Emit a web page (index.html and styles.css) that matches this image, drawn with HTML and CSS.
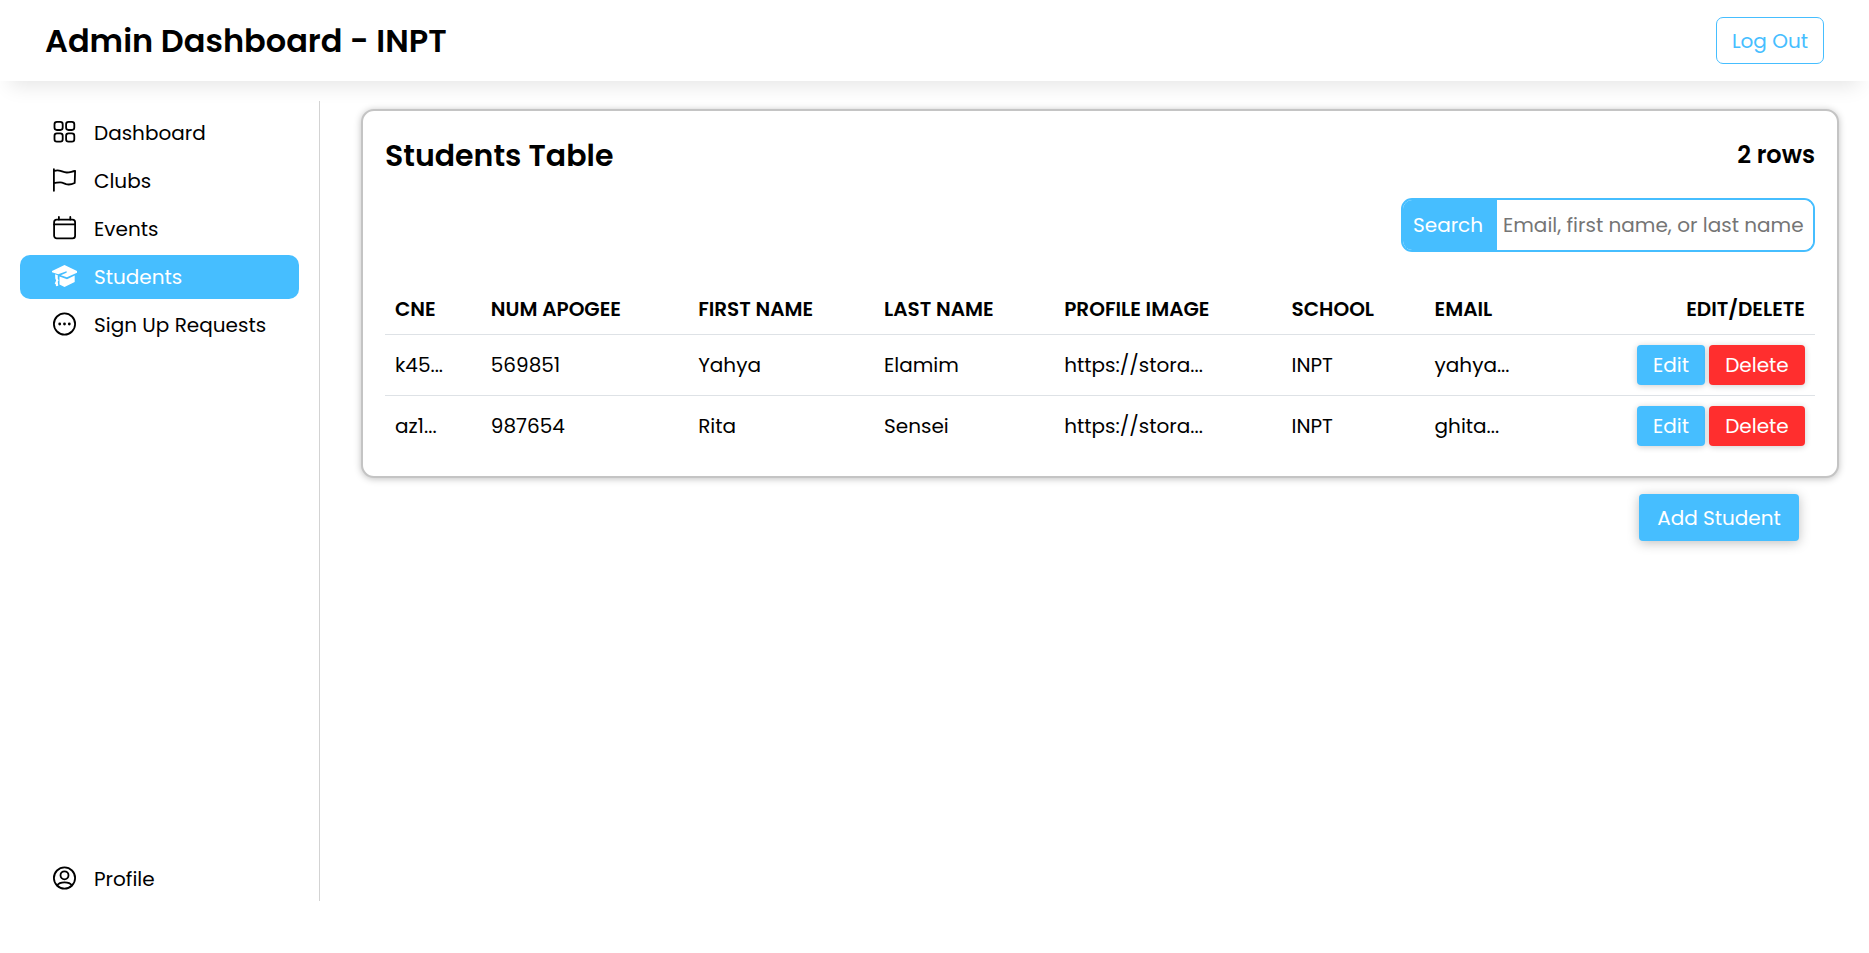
FILE: index.html
```html
<!DOCTYPE html>
<html lang="en">
<head>
<meta charset="utf-8">
<title>Admin Dashboard - INPT</title>
<link rel="stylesheet" href="styles.css">
</head>
<body>
<header class="topbar">
  <h1 class="topbar-title">Admin Dashboard - INPT</h1>
  <button type="button" class="logout">Log Out</button>
</header>
<div class="layout">
  <nav class="sidebar" aria-label="Main">
    <a class="nav-item" href="#dashboard">
      <svg class="icon" viewBox="0 0 24 24" aria-hidden="true"><rect x="2" y="1.8" width="8.2" height="8.2" rx="2.4"/><rect x="13.6" y="1.8" width="8.2" height="8.2" rx="2.4"/><rect x="2" y="13.4" width="8.2" height="8.2" rx="2.4"/><rect x="13.6" y="13.4" width="8.2" height="8.2" rx="2.4"/></svg>
      <span>Dashboard</span>
    </a>
    <a class="nav-item" href="#clubs">
      <svg class="icon" viewBox="0 0 24 24" aria-hidden="true"><path d="M1.4 1.200v21.600M1.400 3.200c2-.8 4.600-.9 6.600-.3 2 .6 3.500 1.500 6.200 1.600 3 .1 4.600-.9 8.400-1.500l-.4 12c-3.400 1.600-6.200 1.900-8.600 1.100-2.200-.8-3.800-1.700-6-1.700-2.400 0-4.200.2-6.200.8"/></svg>
      <span>Clubs</span>
    </a>
    <a class="nav-item" href="#events">
      <svg class="icon" viewBox="0 0 24 24" aria-hidden="true"><rect x="1.600" y="3.600" width="21" height="18.800" rx="2.600"/><path d="M1.600 8.400h21M6.400.9v2.700M17.800.9v2.700"/></svg>
      <span>Events</span>
    </a>
    <a class="nav-item active" href="#students" aria-current="page">
      <svg class="icon icon-cap" viewBox="0 0 26 24" aria-hidden="true"><path d="M13 .6 26 6.800v1.800l-10.500 4.800-6.300-2.200 5.800-2.700c.8-.4.3-1.700-.7-1.300L6.400 10.200 0 8V6.800z"/><path d="M7.800 12.600l7.800 2.900 8-3.900v6.600l-10.600 5.200-5.200-2.600z"/><path d="M3.200 10.100l2.800 1v3.700l.9 1.700-.9 1.500.5 4.200-2.300.4-.4-2.400-1-.1 1.500-3.500-.9-2z"/></svg>
      <span>Students</span>
    </a>
    <a class="nav-item" href="#requests">
      <svg class="icon" viewBox="0 0 24 24" aria-hidden="true"><circle cx="12" cy="12" r="10.600"/><g class="dots"><circle cx="7.200" cy="12" r="1.400"/><circle cx="12" cy="12" r="1.400"/><circle cx="16.800" cy="12" r="1.400"/></g></svg>
      <span>Sign Up Requests</span>
    </a>
    <a class="nav-item nav-profile" href="#profile">
      <svg class="icon" viewBox="0 0 24 24" aria-hidden="true"><circle cx="12" cy="12" r="10.600"/><circle cx="12" cy="9.300" r="4"/><path d="M4.600 19.400c1.300-2 4-3 7.400-3s6.100 1 7.400 3"/></svg>
      <span>Profile</span>
    </a>
  </nav>
  <main class="content">
    <section class="card">
      <div class="card-head">
        <h2 class="card-title">Students Table</h2>
        <p class="row-count">2 rows</p>
      </div>
      <div class="search">
        <label class="search-label" for="search">Search</label>
        <input class="search-input" id="search" type="text" placeholder="Email, first name, or last name">
      </div>
      <table class="students">
        <colgroup>
          <col class="col-cne"><col class="col-apogee"><col class="col-first"><col class="col-last"><col class="col-image"><col class="col-school"><col>
          <col class="col-actions">
        </colgroup>
        <thead>
          <tr><th>CNE</th><th>NUM APOGEE</th><th>FIRST NAME</th><th>LAST NAME</th><th>PROFILE IMAGE</th><th>SCHOOL</th><th>EMAIL</th><th class="actions-head">EDIT/DELETE</th></tr>
        </thead>
        <tbody>
          <tr>
            <td>k45...</td><td>569851</td><td>Yahya</td><td>Elamim</td><td>https://stora...</td><td>INPT</td><td>yahya...</td>
            <td><div class="actions"><button type="button" class="btn btn-edit">Edit</button><button type="button" class="btn btn-delete">Delete</button></div></td>
          </tr>
          <tr>
            <td>az1...</td><td>987654</td><td>Rita</td><td>Sensei</td><td>https://stora...</td><td>INPT</td><td>ghita...</td>
            <td><div class="actions"><button type="button" class="btn btn-edit">Edit</button><button type="button" class="btn btn-delete">Delete</button></div></td>
          </tr>
        </tbody>
      </table>
    </section>
    <button type="button" class="btn btn-add">Add Student</button>
  </main>
</div>
</body>
</html>
```
FILE: styles.css
```css
* { box-sizing: border-box; }

body {
  margin: 0;
  background: #fff;
  color: #000;
  font: 400 20px/30px Poppins, Inter, "Open Sans", sans-serif;
}

h1, h2, p { margin: 0; }

button, input { font: inherit; }

button { cursor: pointer; }

.topbar {
  display: flex;
  align-items: center;
  justify-content: space-between;
  padding: 17px 45px;
  box-shadow: 0 15px 20px -10px rgba(0, 0, 0, 0.1);
}

.topbar-title {
  font-size: 32px;
  font-weight: 600;
  line-height: 46px;
}

.logout {
  min-width: 108px;
  height: 47px;
  padding: 0 15px;
  border: 1px solid #46beff;
  border-radius: 7px;
  background: #fff;
  color: #46beff;
}

.layout {
  display: flex;
  padding-top: 20px;
}

.sidebar {
  display: flex;
  flex: 0 0 320px;
  flex-direction: column;
  gap: 4px;
  min-height: calc(100vh - 153px);
  padding: 10px 20px 0;
  border-right: 1px solid #d3d3d3;
}

.nav-item {
  display: flex;
  align-items: center;
  gap: 17px;
  height: 44px;
  padding: 0 32px;
  border-radius: 10px;
  color: #000;
  text-decoration: none;
  white-space: nowrap;
}

.nav-item.active {
  background: #46beff;
  color: #fff;
}

.nav-profile { margin-top: auto; }

.icon {
  flex: none;
  width: 25px;
  height: 24px;
  margin-bottom: 2px;
  fill: none;
  stroke: currentColor;
  stroke-width: 1.8;
  stroke-linecap: round;
  stroke-linejoin: round;
}

.icon-cap, .dots {
  fill: currentColor;
  stroke: none;
}

.content {
  display: flex;
  flex: 1;
  flex-direction: column;
  min-width: 0;
  padding: 8px 30px 0 41px;
}

.card {
  padding: 22px 22px 20px;
  border: 2px solid #c4c4c4;
  border-radius: 13px;
  background: #fff;
  box-shadow: 0 1px 7px rgba(0, 0, 0, 0.25);
}

.card-head {
  display: flex;
  align-items: flex-start;
  justify-content: space-between;
}

.card-title {
  font-size: 30px;
  font-weight: 600;
  line-height: 45px;
}

.row-count {
  font-size: 24px;
  font-weight: 600;
  line-height: 44px;
}

.search {
  display: flex;
  width: 414px;
  height: 54px;
  margin: 20px 0 32px auto;
  overflow: hidden;
  border: 2px solid #46beff;
  border-radius: 11px;
}

.search-label {
  flex: 0 0 94px;
  padding-left: 10px;
  background: #46beff;
  color: #fff;
  line-height: 50px;
}

.search-input {
  flex: 1;
  min-width: 0;
  padding: 0 6px;
  border: 0;
  outline: 0;
  background: #fff;
  color: #000;
}

.search-input::placeholder { color: #757575; }

.students {
  width: 100%;
  border-collapse: collapse;
  table-layout: fixed;
}

.students th,
.students td {
  padding: 10px;
  text-align: left;
  white-space: nowrap;
}

.students th {
  font-weight: 600;
}

.students tbody tr { border-top: 1px solid #dee2e6; }

.students .actions-head { text-align: right; }

.col-cne { width: 6.7%; }
.col-apogee { width: 14.5%; }
.col-first { width: 13%; }
.col-last { width: 12.6%; }
.col-image { width: 15.9%; }
.col-school { width: 10%; }
.col-actions { width: 14%; }

.actions {
  display: flex;
  gap: 4px;
  justify-content: flex-end;
}

.btn {
  border: 0;
  border-radius: 4px;
  background: #46beff;
  box-shadow: 0 1px 6px rgba(0, 0, 0, 0.2);
  color: #fff;
}

.btn-edit {
  width: 68px;
  height: 40px;
  padding: 0;
}

.btn-delete {
  width: 96px;
  height: 40px;
  padding: 0;
  background: #ff2e2e;
}

.btn-add {
  align-self: flex-end;
  min-width: 160px;
  height: 47px;
  margin: 16px 40px 0 0;
  box-shadow: 0 2px 12px rgba(0, 0, 0, 0.25);
}
```
